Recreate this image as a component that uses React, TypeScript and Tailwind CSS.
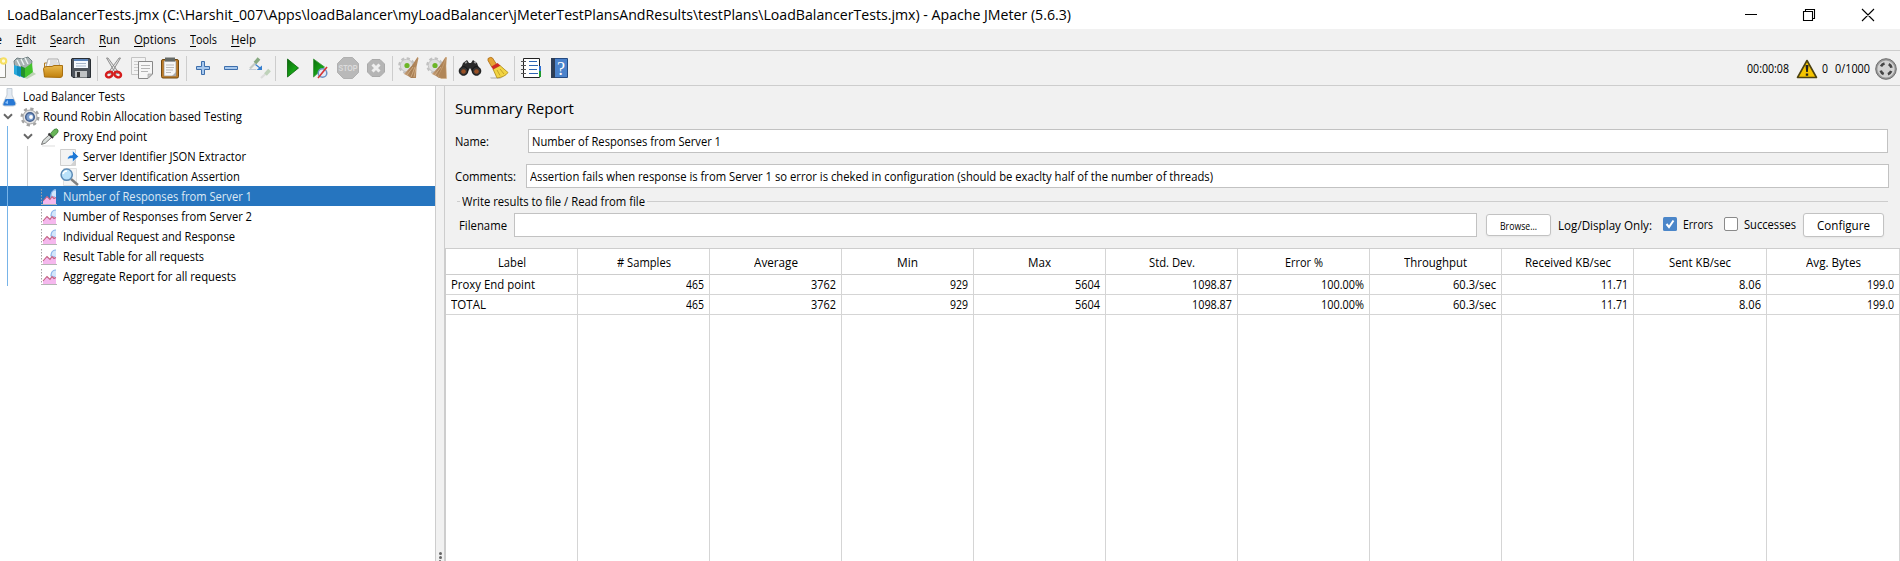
import { useLayoutEffect, useRef } from "react";
import type { ReactNode } from "react";

/* One line of text, condensed or widened to an exact width. */
function T({ w, className = "", children }: { w: number; className?: string; children: ReactNode }) {
  const ref = useRef<HTMLSpanElement>(null);
  useLayoutEffect(() => {
    const el = ref.current;
    if (!el) return;
    el.style.transform = "none";
    el.style.transform = `scaleX(${w / el.getBoundingClientRect().width})`;
  }, [w]);
  return (
    <span className={`inline-block whitespace-nowrap ${className}`} style={{ width: w }}>
      <span ref={ref} className="inline-block origin-left">{children}</span>
    </span>
  );
}

const Chart = () => (
  <svg width="17" height="18" viewBox="0 0 17 18" className="shrink-0">
    <path d="M.5 1V16" fill="none" stroke="#a5a5a5" strokeDasharray="1.500 1.500" />
    <path d="M0 16.500H16" fill="none" stroke="#b5b5b5" />
    <path d="M9 12L10 5L13 1.500H15V15H9Z" fill="#d3e6fb" />
    <path d="M15 2Q10 2 10 8M10 8L14 9" fill="none" stroke="#8ab4ea" strokeWidth="1.200" />
    <path d="M2 13L6 8.500L9 11.500L11 8L15 10V16H2Z" fill="#f5b8ee" />
    <path d="M2 13L6 8.500L9 11.500L11 8.500L13 10.500L15 9.500" fill="none" stroke="#c0607c" strokeWidth="1.100" />
  </svg>
);

const Chevron = () => (
  <svg width="10" height="7" viewBox="0 0 10 7" className="mb-[2px] shrink-0"><path d="M1 1.3L5 5.2L9 1.3" fill="none" stroke="#666" strokeWidth="2" /></svg>
);

const Pipette = () => (
  <svg width="19" height="19" viewBox="0 0 19 19" className="shrink-0">
    <path d="M2 18H15" stroke="#ddd" />
    <path d="M1.500 16.500L3 12.500L9.500 6.500L12 9L5.500 15Z" fill="#d8dedb" stroke="#666" strokeWidth=".9" />
    <path d="M8.500 5.500L13 10" stroke="#333" strokeWidth="2" />
    <path d="M10.500 5.500L14 1.500Q17 0 18 2Q18.500 4 17 5.500L13 9Z" fill="#69b558" stroke="#3d7c38" strokeWidth=".8" />
  </svg>
);

const Flask = () => (
  <svg width="15" height="19" viewBox="0 0 15 19" className="shrink-0">
    <path d="M5 .5H10V7L14 15.500Q14 18 11 18H3Q0 18 1 15.500L5 7Z" fill="#e3eaf2" stroke="#b9c3cd" strokeWidth=".8" />
    <path d="M3.500 11H11.500L13.500 15.500Q13.500 17.500 11 17.500H3.500Q.5 17.500 1.500 15.500Z" fill="#2878d4" />
    <path d="M3 15L6 12L6 16Z" fill="#8bc0f8" />
  </svg>
);

const Gear = () => (
  <svg width="20" height="20" viewBox="0 0 20 20" className="shrink-0">
    <circle cx="10" cy="10" r="8.300" fill="none" stroke="#a2a2a2" strokeWidth="2.400" strokeDasharray="3.260 3.260" />
    <circle cx="10" cy="10" r="7" fill="#e2e2e2" stroke="#a5a5a5" />
    <circle cx="10" cy="10" r="4.300" fill="#7d9fce" stroke="#46618f" strokeWidth="1.500" />
    <circle cx="11" cy="10" r="1.900" fill="#fff" />
  </svg>
);

const Extractor = () => (
  <svg width="20" height="19" viewBox="0 0 20 19" className="shrink-0">
    <path d="M.5 1.500H15.500V17.500H.5Z" fill="#f3f3f3" stroke="#cfcfcf" />
    <path d="M7.500 11.500Q7.500 7 12.500 7V2.500L18.500 8.500L12.500 14V10.500Q9.500 10 7.500 11.500Z" fill="#1d78d6" stroke="#fff" strokeWidth=".6" />
    <path d="M10 18L15 12V18Z" fill="#d2d2d2" />
  </svg>
);

const Lens = () => (
  <svg width="20" height="19" viewBox="0 0 20 19" className="shrink-0">
    <path d="M3.500 .5H16.500V17.500H3.500Z" fill="#f4f4f4" stroke="#e0e0e0" />
    <path d="M11 11L18 17" stroke="#808080" strokeWidth="2.400" />
    <circle cx="6.700" cy="6.700" r="5.600" fill="#b9e1fa" stroke="#5c8ab5" strokeWidth="1.500" />
    <path d="M3 6Q4 3 7 3" stroke="#fff" strokeWidth="1.500" fill="none" />
  </svg>
);

type Node = { label: string; w: number; pad: string; icon: ReactNode; gap: string; chevron?: boolean; selected?: boolean };
const nodes: Node[] = [
  { label: "Load Balancer Tests", w: 102, pad: "pl-[2px]", icon: <Flask />, gap: "gap-[6px]" },
  { label: "Round Robin Allocation based Testing", w: 199, pad: "pl-[3px]", icon: <span className="ml-[6px] flex"><Gear /></span>, gap: "gap-[3px]", chevron: true },
  { label: "Proxy End point", w: 84, pad: "pl-[23px]", icon: <span className="ml-[6px] flex"><Pipette /></span>, gap: "gap-[4px]", chevron: true },
  { label: "Server Identifier JSON Extractor", w: 163, pad: "pl-[60px]", icon: <Extractor />, gap: "gap-[3px]" },
  { label: "Server Identification Assertion", w: 157, pad: "pl-[60px]", icon: <Lens />, gap: "gap-[3px]" },
  { label: "Number of Responses from Server 1", w: 189, pad: "pl-[41px]", icon: <Chart />, gap: "gap-[5px]", selected: true },
  { label: "Number of Responses from Server 2", w: 189, pad: "pl-[41px]", icon: <Chart />, gap: "gap-[5px]" },
  { label: "Individual Request and Response", w: 172, pad: "pl-[41px]", icon: <Chart />, gap: "gap-[5px]" },
  { label: "Result Table for all requests", w: 141, pad: "pl-[41px]", icon: <Chart />, gap: "gap-[5px]" },
  { label: "Aggregate Report for all requests", w: 173, pad: "pl-[41px]", icon: <Chart />, gap: "gap-[5px]" },
];

/* Toolbar drawings share one strip; x positions are in toolbar pixels. */
const Toolbar = () => (
  <svg width="580" height="34" viewBox="0 51 580 34" className="shrink-0">
    <defs>
      <linearGradient id="green" x1="0" y1="0" x2="1" y2="1"><stop offset="0" stopColor="#0b6b0b" /><stop offset=".6" stopColor="#16a316" /><stop offset="1" stopColor="#075e07" /></linearGradient>
      <linearGradient id="folder" x1="0" y1="0" x2="0" y2="1"><stop offset="0" stopColor="#eab94c" /><stop offset="1" stopColor="#c07f0b" /></linearGradient>
      <linearGradient id="straw" x1="0" y1="0" x2="1" y2="0"><stop offset="0" stopColor="#c9a27a" /><stop offset=".5" stopColor="#a57c52" /><stop offset="1" stopColor="#b98e63" /></linearGradient>
    </defs>
    <path d="M97.500 56V81M186.500 56V81M275.500 56V81M392.500 56V81M453.500 56V81M514.500 56V81" stroke="#cdcdcd" />
    {/* new */}
    <path d="M-8 59H5.500V77.500H-8" fill="#fafafa" stroke="#8c8c83" />
    <circle cx="3.500" cy="61" r="3.800" fill="#f6df62" /><circle cx="3.500" cy="61" r="1.700" fill="#fffbd8" />
    {/* templates */}
    <path d="M14 61L17 58L22 59L28 57L32 61L31 69L15 69Z" fill="#a7b1b2" stroke="#718083" />
    <path d="M17 60L20 66M21 59L24 65M25 58L28 64" stroke="#edf4f4" strokeWidth="1.400" />
    <path d="M14 65L20 67V77L14 74Z" fill="#28a9db" />
    <path d="M17 66L24 68V78L17 75Z" fill="#108cc0" />
    <path d="M21 66L25 68V78L21 76Z" fill="#23912a" />
    <path d="M25 68L32 63L33 73L25 78Z" fill="#42c32b" />
    <path d="M33 72L36 74L27 79L25 78Z" fill="#bcd4b4" />
    {/* open */}
    <path d="M44.500 75V63H48L50 61" fill="none" stroke="#b27b21" />
    <path d="M48 59H58L60 67H46Z" fill="#f7f7f7" stroke="#999" strokeWidth=".8" />
    <path d="M50 61H57M50 63H58M49 65H59" stroke="#b9b9b9" strokeWidth=".8" />
    <path d="M44.500 77L43.500 68.500Q44 66.500 47 66.500H52L54 65.500H62.500V75Q62.500 77.500 60 77.500Z" fill="url(#folder)" stroke="#a97010" />
    {/* save */}
    <path d="M72 58.500H89Q90.500 58.500 90.500 60V77.500H73L71.500 76V59Z" fill="#4d535b" stroke="#292e34" />
    <path d="M74 59H88V68H74Z" fill="#f5f9fe" /><path d="M74 59H88V61H74Z" fill="#5b83b8" /><path d="M76 63.500H86M76 66H86" stroke="#a8b7ca" />
    <path d="M75 71H87V77.500H75Z" fill="#bfc2c4" /><path d="M77 72H80V77H77Z" fill="#333" />
    {/* cut */}
    <path d="M106.500 58L108 58L119 73L116 74ZM120.500 58L119 58L108 73L111 74Z" fill="#e3e3e3" stroke="#858585" strokeWidth=".9" />
    <ellipse cx="109.300" cy="74.500" rx="3.400" ry="2.700" fill="none" stroke="#d51d1d" strokeWidth="2.500" transform="rotate(-25 109.300 74.500)" />
    <ellipse cx="117.700" cy="74.500" rx="3.400" ry="2.700" fill="none" stroke="#d51d1d" strokeWidth="2.500" transform="rotate(25 117.700 74.500)" />
    {/* copy */}
    <path d="M131.500 57.500H145.500V74.500H131.500Z" fill="#f3f3f3" stroke="#c4c4c4" />
    <path d="M134 61.500H143M134 64.500H143M134 67.500H141M134 70.500H139" stroke="#ccc" />
    <path d="M138.500 61.500H152.500V74L148 78.500H138.500Z" fill="#f6f6f6" stroke="#888" />
    <path d="M141 65.500H150M141 68.500H150M141 71.500H148" stroke="#b5b5b5" /><path d="M152 74H148V78Z" fill="#ccc" stroke="#999" strokeWidth=".6" />
    {/* paste */}
    <rect x="161.500" y="59.500" width="17" height="18.500" rx="1.500" fill="#bf7c27" stroke="#71480f" />
    <path d="M164 61H176V76H164Z" fill="#f6f6f6" stroke="#888" strokeWidth=".6" /><path d="M165 57.500H175V61.500H165Z" fill="#666a66" />
    <path d="M166 65H174M166 67.500H174M166 70H173M166 72.500H171" stroke="#bbb" /><path d="M176 72L172 76H176Z" fill="#aaa" />
    {/* expand, collapse */}
    <path d="M201.500 61.500H204.500V66.500H209.500V69.500H204.500V74.500H201.500V69.500H196.500V66.500H201.500Z" fill="#a7c8ed" stroke="#3e6fac" />
    <path d="M224.500 66.500H237.500V69.500H224.500Z" fill="#a7c8ed" stroke="#3e6fac" />
    {/* toggle */}
    <path d="M250 68.500L256 62.500" stroke="#c3cac3" strokeWidth="2.200" /><path d="M255 63L259 58.500" stroke="#87a981" strokeWidth="3.600" />
    <path d="M249 69.500H256" stroke="#c3ccd6" fill="none" /><path d="M255.500 64.500L260 68" stroke="#367fcf" strokeWidth="1.200" /><path d="M256.500 70H262V65.500Z" fill="#367fcf" />
    <path d="M261 78L266 73.500" stroke="#dcdcdc" strokeWidth="2.200" /><path d="M265.500 74.500L269.500 70" stroke="#bfd2ba" strokeWidth="3.600" />
    {/* start */}
    <path d="M287.500 59L298.500 68L287.500 77Z" fill="url(#green)" stroke="#096209" strokeWidth=".8" />
    <path d="M313.500 59L324.500 67L313.500 77Z" fill="url(#green)" stroke="#3b963b" strokeWidth=".8" />
    <circle cx="322.500" cy="73" r="4.300" fill="#e4ebf7" stroke="#6c91c4" strokeWidth="1.500" /><path d="M318 78L327 67" stroke="#d53434" strokeWidth="1.600" />
    {/* stop, shutdown */}
    <path d="M343.500 57.500H352.500L358.500 63.500V72.500L352.500 78.500H343.500L337.500 72.500V63.500Z" fill="#b9b9b9" stroke="#b0b0b0" />
    <text x="348" y="71" textAnchor="middle" fontSize="8.500" fontWeight="700" textLength="19" lengthAdjust="spacingAndGlyphs" fill="#dcdcdc" className="font-['Liberation_Sans',sans-serif]">STOP</text>
    <path d="M372 59.500H380L384.500 64V72L380 76.500H372L367.500 72V64Z" fill="#b5b5b5" stroke="#aaa" /><path d="M372.500 64.500L379.500 71.500M379.500 64.500L372.500 71.500" stroke="#eee" strokeWidth="3" />
    {/* clear, clear all */}
    {[0, 28].map((x) => (
      <g key={x} transform={`translate(${x} 0)`}>
        <circle cx="406.500" cy="65.500" r="6.800" fill="none" stroke="#c1c1c1" strokeWidth="3" strokeDasharray="3.050 2.290" />
        <circle cx="406.500" cy="65.500" r="6.200" fill="#dedede" stroke="#c4c4c4" /><circle cx="407" cy="65.500" r="2.600" fill="#6cb526" />
        <path d="M417.500 57L412 65.500L404 74L408 76L411 78H416L416.500 67L418.500 58Z" fill="url(#straw)" />
        <path d="M407 75L413 67M411 77L415 67M414 77L416 68" stroke="#dcbc94" strokeWidth=".7" />
        {x > 0 && <path d="M418.500 57L415 66L410 76L413 78.500H418.500L418 66Z" fill="#b08658" stroke="#d0ab7e" strokeWidth=".5" />}
      </g>
    ))}
    {/* search */}
    <path d="M463 63L467 60L469 63H471L473 60L477 63L480 71L474 75L470 68L466 75L460 71Z" fill="#292929" />
    <circle cx="463.500" cy="71" r="4.300" fill="#333" stroke="#111" /><circle cx="476.500" cy="71" r="4.300" fill="#333" stroke="#111" />
    <circle cx="463.500" cy="71.500" r="2.300" fill="#9a5025" /><circle cx="476.500" cy="71.500" r="2.300" fill="#9a5025" />
    <path d="M465 63L467 62M474 62L476 63" stroke="#999" strokeWidth="1.500" />
    {/* reset search */}
    <path d="M490 77H503L500 79H491Z" fill="#ccc" />
    <path d="M488 58.500Q491 56.500 492.500 58L497 65L492 67.500L488 60.500Z" fill="#e5a334" stroke="#a96912" strokeWidth=".8" />
    <path d="M493 69L500 65.500L508 72.500Q505 77 497 78Z" fill="#f2d443" stroke="#ac8814" strokeWidth=".8" /><path d="M497 70L500 75.500M500 69L504 74" stroke="#b99720" strokeWidth=".8" />
    <path d="M491.500 66.500L497.500 63L500.500 65.500L493 69.500Z" fill="#cf2b24" />
    {/* function helper */}
    <path d="M523.500 58.500H539.500V77.500H523.500Z" fill="#fff" stroke="#222" />
    <path d="M521 61.500H526M521 65.500H526M521 69.500H526M521 73.500H526" stroke="#555" /><path d="M529 61.500H537M529 65.500H538M529 69.500H537M529 73.500H538" stroke="#2e65b3" strokeWidth="1.200" />
    <path d="M539 66H541V71H539Z" fill="#2f70d2" /><path d="M539 71H541V77H539Z" fill="#1f9a30" />
    {/* help */}
    <path d="M551.500 58.500H567.500V77.500H551.500Z" fill="#4a82cb" stroke="#244a82" /><path d="M551 58H555V78H551Z" fill="#2d3d55" />
    <text x="561" y="74.500" textAnchor="middle" fontSize="18" fill="#fff" className="font-['Liberation_Serif',serif]">?</text>
  </svg>
);

const columns: [string, number, string, string, number, string][] = [
  ["# Samples", 54, "465", "465", 18, "w-[132px]"],
  ["Average", 44, "3762", "3762", 25, "w-[132px]"],
  ["Min", 21, "929", "929", 18, "w-[132px]"],
  ["Max", 23, "5604", "5604", 25, "w-[132px]"],
  ["Std. Dev.", 46, "1098.87", "1098.87", 40, "w-[132px]"],
  ["Error %", 38, "100.00%", "100.00%", 43, "w-[132px]"],
  ["Throughput", 63, "60.3/sec", "60.3/sec", 43, "w-[132px]"],
  ["Received KB/sec", 86, "11.71", "11.71", 27, "w-[132px]"],
  ["Sent KB/sec", 62, "8.06", "8.06", 22, "w-[133px]"],
  ["Avg. Bytes", 55, "199.0", "199.0", 27, "w-[133px]"],
];

const menus: [string, number][] = [
  ["Edit", 20],
  ["Search", 35],
  ["Run", 21],
  ["Options", 42],
  ["Tools", 27],
  ["Help", 25],
];

export default function App() {
  return (
    <div className="flex h-[561px] w-[1900px] flex-col overflow-hidden bg-[#f1f1f1] font-['Open_Sans','Noto_Sans',sans-serif] text-[12px] leading-[16px] text-black">
      <header className="flex h-[29px] shrink-0 items-center bg-white pl-[7px]">
        <T w={1064} className="mb-[2px] text-[15px] leading-[20px]">LoadBalancerTests.jmx (C:\Harshit_007\Apps\loadBalancer\myLoadBalancer\jMeterTestPlansAndResults\testPlans\LoadBalancerTests.jmx) - Apache JMeter (5.6.3)</T>
        <svg width="156" height="28" viewBox="1736 0 156 28" className="ml-auto mr-[8px]">
          <path d="M1745 13.500H1757M1803.500 10.500H1812.500V19.500H1803.500ZM1805.500 10V8.500H1814.500V17.500H1813M1862 8L1874 20M1874 8L1862 20" fill="none" stroke="#000" strokeWidth="1.100" />
        </svg>
      </header>
      <nav className="flex h-[22px] shrink-0 items-center gap-[14px] border-b border-[#cdcdcd]">
        <span className="flex w-[2px] justify-end overflow-hidden">e</span>
        {menus.map(([m, w]) => (
          <T key={m} w={w}><span className="underline underline-offset-2">{m[0]}</span>{m.slice(1)}</T>
        ))}
      </nav>
      <div className="flex h-[35px] shrink-0 items-center border-b border-[#cdcdcd]">
        <Toolbar />
        <div className="ml-auto flex items-center pr-[3px] pt-[1px]">
          <T w={42}>00:00:08</T>
          <svg width="22" height="20" viewBox="0 0 22 20" className="ml-[7px]">
            <path d="M11 1.500L20.500 18.500H1.500Z" fill="#f5c400" stroke="#4d4210" strokeWidth="1.600" strokeLinejoin="round" />
            <path d="M9.500 6H12.500L11.800 13H10.200ZM9.800 14.500H12.200V16.800H9.800Z" fill="#222" />
          </svg>
          <T w={6} className="ml-[4px]">0</T>
          <T w={35} className="ml-[7px]">0/1000</T>
          <svg width="22" height="22" viewBox="0 0 22 22" className="ml-[5px]">
            <circle cx="11" cy="11" r="10.300" fill="#999" stroke="#6e6e6e" /><circle cx="11" cy="11" r="8.600" fill="#d2d2d2" />
            <circle cx="11" cy="11" r="5.600" fill="none" stroke="#444" strokeWidth="2.600" strokeDasharray="4.400 4.396" strokeDashoffset="-2.200" />
          </svg>
        </div>
      </div>
      <main className="flex min-h-0 flex-1">
        <aside className="relative w-[435px] shrink-0 bg-white">
          {nodes.map((n) => (
            <div key={n.label} className={`flex h-[20px] items-center pt-[2px] ${n.pad} ${n.gap} ${n.selected ? "bg-[#2675bf] text-[#dce9f5]" : ""}`}>
              <span className="flex items-center">{n.chevron && <Chevron />}{n.chevron && <span className="w-[1px]" />}{n.icon}</span>
              <T w={n.w}>{n.label}</T>
            </div>
          ))}
          <div className="absolute left-[7px] top-[40px] h-[160px] w-px bg-[#78b4e8]" />
          <div className="absolute left-[27px] top-[60px] h-[40px] w-px bg-[#cfcfcf]" />
        </aside>
        <div className="flex w-[10px] shrink-0 flex-col items-center justify-end gap-[1px] border-x border-[#cdcdcd]">
          <span className="size-[3px] rounded-full bg-[#666]" />
          <span className="size-[3px] rounded-full bg-[#666]" />
          <span className="h-px w-[2px] bg-[#888]" />
        </div>
        <section className="flex min-w-0 flex-1 flex-col">
          <div className="flex h-[162px] shrink-0 flex-col pl-[10px]">
            <h1 className="mt-[11px] h-[22px]"><T w={119} className="text-[15px] leading-[22px]">Summary Report</T></h1>
            <div className="mt-[10px] flex h-[24px] items-center">
              <div className="w-[73px] shrink-0 pt-[2px]"><T w={34}>Name:</T></div>
              <div className="flex h-[24px] w-[1360px] items-center border border-[#c2c2c2] bg-white pl-[3px] pt-[2px]"><T w={189}>Number of Responses from Server 1</T></div>
            </div>
            <div className="mt-[11px] flex h-[24px] items-center">
              <div className="w-[71px] shrink-0 pt-[2px]"><T w={61}>Comments:</T></div>
              <div className="flex h-[24px] w-[1363px] items-center border border-[#c2c2c2] bg-white pl-[3px] pt-[2px]"><T w={683}>Assertion fails when response is from Server 1 so error is cheked in configuration (should be exaclty half of the number of threads)</T></div>
            </div>
            <div className="mt-[4px] flex h-[18px] items-center pl-[2px]">
              <span className="h-px w-[3px] bg-[#cdcdcd]" />
              <T w={183} className="ml-[2px] pt-[2px]">Write results to file / Read from file</T>
              <span className="ml-[2px] h-px w-[1241px] bg-[#cdcdcd]" />
            </div>
            <div className="mt-[3px] flex h-[24px] items-center pl-[4px]">
              <T w={48} className="pt-[2px]">Filename</T>
              <div className="ml-[7px] h-[24px] w-[963px] border border-[#c2c2c2] bg-white" />
              <button className="ml-[9px] flex h-[22px] w-[65px] items-center justify-center rounded-[3px] border border-[#c2c2c2] bg-white pt-[1px] text-[10px] shadow-xs"><T w={37}>Browse...</T></button>
              <T w={94} className="ml-[7px] pt-[2px]">Log/Display Only:</T>
              <svg width="14" height="14" viewBox="0 0 14 14" className="mb-[2px] ml-[11px]"><rect width="14" height="14" rx="1.500" fill="#4b86c9" /><path d="M3.500 7L6 10L10.500 3.500" fill="none" stroke="#fff" strokeWidth="2" /></svg>
              <T w={30} className="ml-[6px]">Errors</T>
              <span className="mb-[2px] ml-[11px] size-[14px] rounded-[2px] border border-[#8a8a8a] bg-white" />
              <T w={52} className="ml-[6px]">Successes</T>
              <button className="ml-[7px] flex h-[24px] w-[81px] items-center justify-center rounded-[3px] border border-[#c2c2c2] bg-white pt-[2px] shadow-xs"><T w={53}>Configure</T></button>
            </div>
          </div>
          <div className="flex min-h-0 flex-1 border-l border-t border-[#cdcdcd] bg-white">
            <div className="flex w-[132px] shrink-0 flex-col border-r border-[#d5d5d5]">
              <div className="flex h-[26px] shrink-0 items-center justify-center border-b border-[#cdcdcd] pt-[3px]"><T w={28}>Label</T></div>
              <div className="flex h-[20px] shrink-0 items-center border-b border-[#d5d5d5] pl-[5px] pt-[1px]"><T w={84}>Proxy End point</T></div>
              <div className="flex h-[20px] shrink-0 items-center border-b border-[#d5d5d5] pl-[5px] pt-[1px]"><T w={35}>TOTAL</T></div>
            </div>
            {columns.map(([h, hw, a, b, vw, cw]) => (
              <div key={h} className={`flex shrink-0 flex-col border-r border-[#d5d5d5] ${cw}`}>
                <div className="flex h-[26px] shrink-0 items-center justify-center border-b border-[#cdcdcd] pt-[3px]"><T w={hw}>{h}</T></div>
                <div className="flex h-[20px] shrink-0 items-center justify-end border-b border-[#d5d5d5] pr-[5px] pt-[1px]"><T w={vw}>{a}</T></div>
                <div className="flex h-[20px] shrink-0 items-center justify-end border-b border-[#d5d5d5] pr-[5px] pt-[1px]"><T w={vw}>{b}</T></div>
              </div>
            ))}
          </div>
        </section>
      </main>
    </div>
  );
}
